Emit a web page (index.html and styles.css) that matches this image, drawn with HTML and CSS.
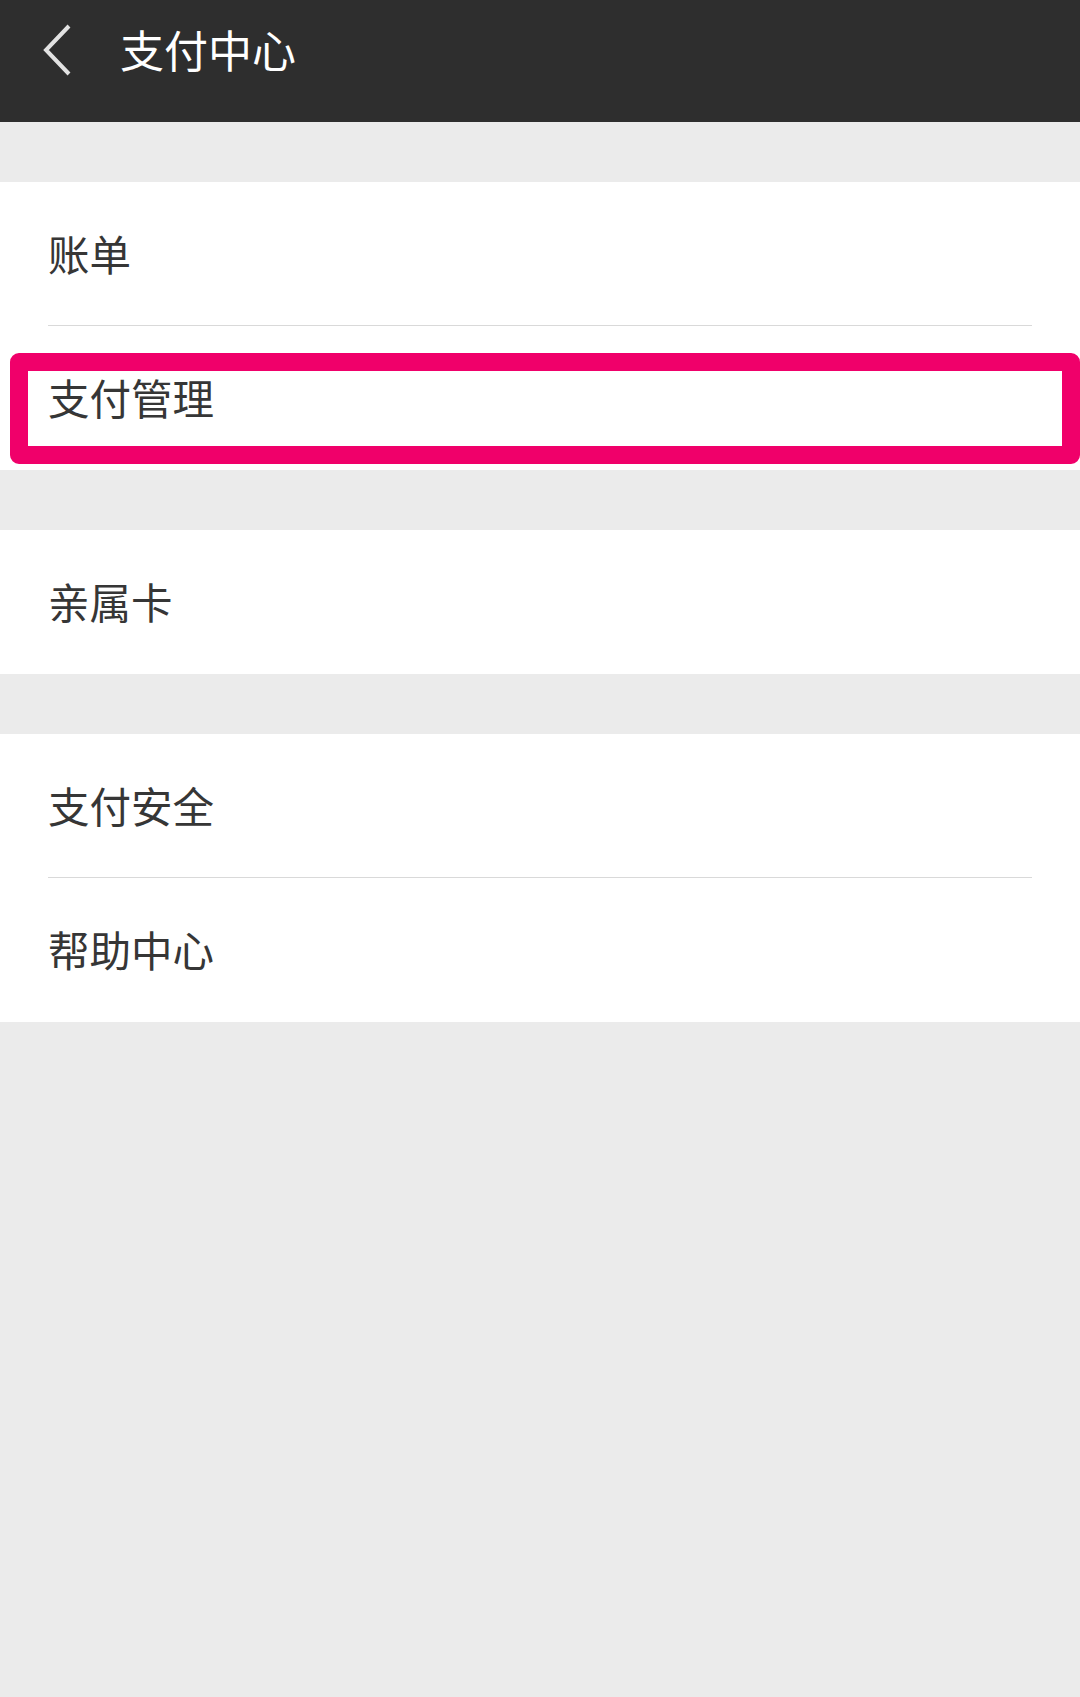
FILE: index.html
```html
<!DOCTYPE html>
<html lang="zh-CN">
<head>
<meta charset="utf-8">
<link rel="stylesheet" href="styles.css">
</head>
<body>
<header class="topbar">
  <svg class="back" width="40" height="60" viewBox="0 0 40 60">
    <polyline points="29,5 6,29 29,53" fill="none" stroke="#e2e2e2" stroke-width="4" stroke-linecap="butt" stroke-linejoin="miter"/>
  </svg>
  <h1 class="title">支付中心</h1>
</header>
<main class="content">
  <section class="group">
    <div class="row"><span class="label">账单</span></div>
    <div class="row highlighted"><span class="label">支付管理</span><div class="mark"></div></div>
  </section>
  <section class="group">
    <div class="row"><span class="label">亲属卡</span></div>
  </section>
  <section class="group">
    <div class="row"><span class="label">支付安全</span></div>
    <div class="row"><span class="label">帮助中心</span></div>
  </section>
</main>
</body>
</html>
```
FILE: styles.css
```css
html, body {
  margin: 0;
  padding: 0;
}
body {
  width: 1080px;
  min-height: 1697px;
  background: #ebebeb;
  font-family: "Noto Sans CJK SC", "Noto Sans", sans-serif;
}
.topbar {
  height: 122px;
  background: #2e2e2e;
  display: flex;
  align-items: center;
  box-sizing: border-box;
  padding-left: 40px;
}
.back {
  display: block;
  margin-top: -20px;
}
.title {
  margin: -24px 0 0 40px;
  font-size: 44px;
  font-weight: 400;
  color: #ffffff;
  line-height: 1;
}
.content {
  padding-top: 60px;
  display: flex;
  flex-direction: column;
  gap: 60px;
}
.group {
  background: #ffffff;
}
.row {
  position: relative;
  height: 144px;
  display: flex;
  align-items: center;
  padding-left: 48px;
}
.row + .row::before {
  content: "";
  position: absolute;
  top: -1px;
  left: 48px;
  right: 48px;
  height: 1px;
  background: #d9d9d9;
}
.label {
  font-size: 41.5px;
  color: #363636;
  line-height: 1;
  margin-top: 0;
}
.mark {
  position: absolute;
  left: 10px;
  right: 0;
  top: 27px;
  bottom: 6px;
  border: 18px solid #f0006a;
  border-radius: 9px;
}
```
